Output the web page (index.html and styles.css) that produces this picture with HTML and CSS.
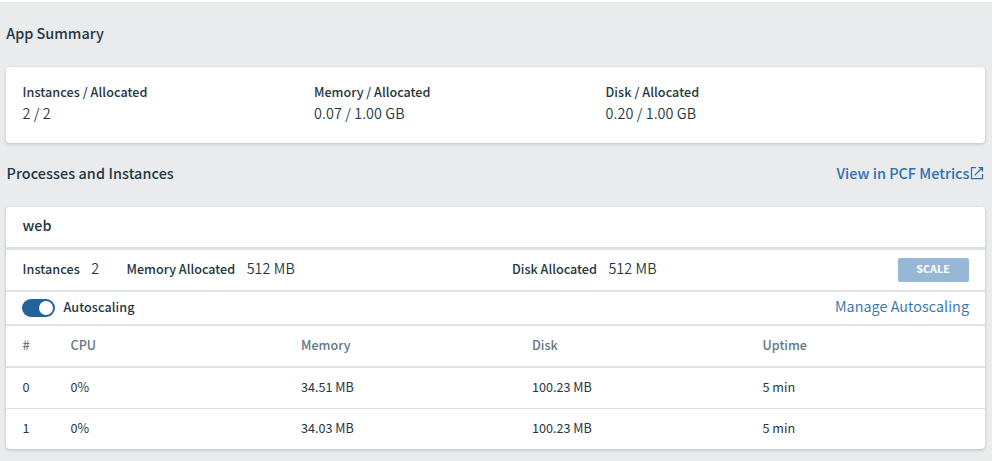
FILE: index.html
```html
<!DOCTYPE html>
<html lang="en">
<head>
<meta charset="utf-8">
<title>App Summary</title>
<link rel="stylesheet" href="styles.css">
</head>
<body>
<main class="page">
  <header class="section-head section-head--first"><h2 class="title title--app">App Summary</h2></header>
  <section class="card summary">
    <div class="stat"><div class="label label--wide">Instances / Allocated</div><div class="value">2 / 2</div></div>
    <div class="stat"><div class="label">Memory / Allocated</div><div class="value">0.07 / 1.00 GB</div></div>
    <div class="stat"><div class="label label--wide">Disk / Allocated</div><div class="value">0.20 / 1.00 GB</div></div>
  </section>
  <header class="section-head">
    <h2 class="title title--processes">Processes and Instances</h2>
    <a class="metrics">View in PCF Metrics<svg class="ext" viewBox="0 0 14 14" width="14" height="14"><path d="M6 1.5H1.5v11h11V8M8.5 1.5h4v4M12.3 1.7L4.8 9.2" fill="none" stroke="currentColor" stroke-width="1.25"/></svg></a>
  </header>
  <section class="card">
    <div class="process-name">web</div>
    <div class="alloc">
      <div class="pair pair--inst"><span class="label label--wide">Instances</span><span class="value">2</span></div>
      <div class="pair pair--mem"><span class="label">Memory Allocated</span><span class="value">512 MB</span></div>
      <div class="pair"><span class="label">Disk Allocated</span><span class="value">512 MB</span></div>
      <button class="scale">SCALE</button>
    </div>
    <div class="auto">
      <span class="toggle"><span class="knob"></span></span>
      <span class="label label--wide">Autoscaling</span>
      <a class="manage">Manage Autoscaling</a>
    </div>
    <div class="row row--head"><span>#</span><span>CPU</span><span>Memory</span><span>Disk</span><span>Uptime</span></div>
    <div class="row"><span>0</span><span>0%</span><span>34.51 MB</span><span>100.23 MB</span><span>5 min</span></div>
    <div class="row"><span>1</span><span>0%</span><span>34.03 MB</span><span>100.23 MB</span><span>5 min</span></div>
  </section>
</main>
</body>
</html>
```
FILE: styles.css
```css
* { box-sizing: border-box; }
body {
  margin: 0;
  background: #e9ebed;
  color: #243640;
  font-family: "Noto Sans CJK JP", "Noto Sans", sans-serif;
}
.page { height: 461px; padding: 0 7px 0 6px; border-top: 2px solid #fff; overflow: hidden; }
.section-head { display: flex; justify-content: space-between; height: 64px; line-height: 60px; padding-right: 1px; }
.section-head--first { height: 65px; line-height: 61px; }
.title { margin: 0; font-size: 14.4px; font-weight: 500; }
.title--app { padding-left: .3px; }
.title--processes { padding-left: .5px; letter-spacing: .08px; }
.metrics { display: flex; align-items: center; height: 59px; font-size: 14.4px; font-weight: 500; letter-spacing: .03px; color: #2f6fae; }
.ext { display: block; margin-top: 1px; margin-left: .5px; }
.card { background: #fff; border-radius: 4px; box-shadow: 0 1px 3px rgba(36, 54, 64, .25); }
.summary { display: grid; grid-template-columns: 291.5px 291.5px 1fr; height: 76px; padding: 14px 16.5px; }
.label { font-size: 12.6px; line-height: 22px; font-weight: 500; }
.label--wide { letter-spacing: .07px; }
.value { font-size: 14.4px; line-height: 19px; font-weight: 350; letter-spacing: .08px; }
.process-name { height: 43px; padding-left: 16.5px; line-height: 35px; font-size: 14.4px; font-weight: 500; border-bottom: 3px solid #dee2e5; }
.alloc { display: flex; align-items: center; height: 42px; padding: 0 16px 0 16.5px; border-bottom: 2px solid #dee2e5; }
.pair { display: flex; gap: 11.5px; line-height: 22px; padding-bottom: 2px; }
.pair--inst { width: 104px; }
.pair--mem { width: 385.5px; }
.scale { width: 71px; height: 24px; margin-left: auto; padding: 0 1px 4px 0; border: 0; border-radius: 2px; background: #96b8d6; color: #fff; font: 700 10.8px/20px "Noto Sans CJK JP", sans-serif; }
.auto { display: flex; align-items: center; height: 34px; padding: 0 16px; border-bottom: 2px solid #dee2e5; }
.auto .label { padding-bottom: 2px; }
.toggle { display: flex; justify-content: flex-end; width: 33px; height: 18px; padding: 2px; margin-right: 8.5px; border-radius: 9px; background: #21639a; }
.knob { width: 14px; height: 14px; border-radius: 50%; background: #fff; }
.manage { margin-left: auto; padding-bottom: 4px; font-size: 14.4px; line-height: 22px; font-weight: 350; letter-spacing: .08px; color: #2f6fae; }
.row { display: grid; grid-template-columns: 48px 230.5px 231px 230.5px 1fr; height: 41px; padding-left: 16.5px; line-height: 37px; font-size: 12.6px; border-bottom: 1px solid #dee2e5; }
.row--head { height: 42px; border-bottom-width: 2px; font-weight: 500; color: #627682; }
.row:last-child { height: 40px; border-bottom: 0; }
```
